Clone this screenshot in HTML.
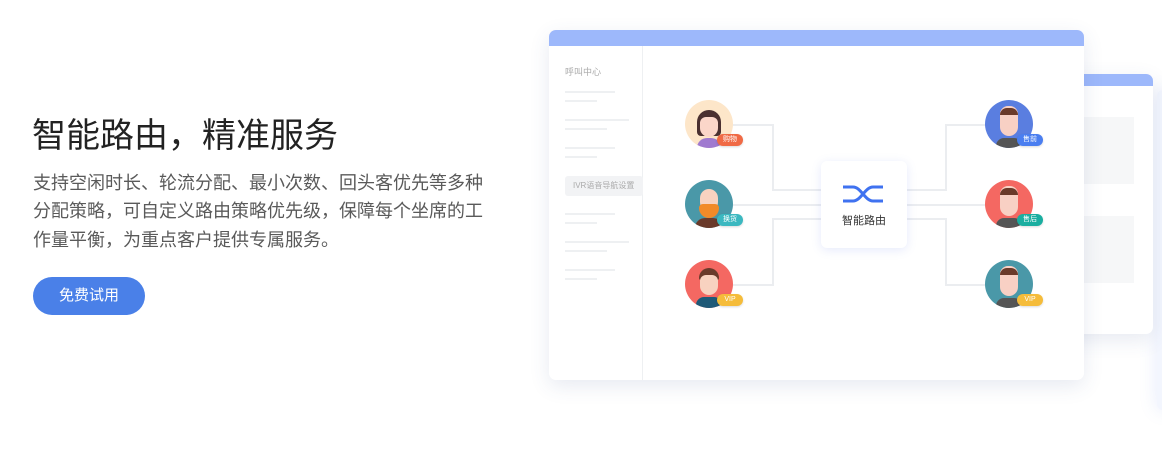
<!DOCTYPE html>
<html><head><meta charset="utf-8"><style>
*{margin:0;padding:0;box-sizing:border-box}
body{width:1162px;height:449px;background:#fff;position:relative;overflow:hidden;font-family:"Liberation Sans","Noto Sans CJK SC",sans-serif}
.abs{position:absolute}
h1{position:absolute;left:32px;top:108px;font-size:34px;font-weight:400;color:#222;white-space:nowrap}
.desc{position:absolute;left:33px;top:169px;font-size:18px;line-height:28.3px;color:#5a5a5a;white-space:nowrap}
.btn{position:absolute;left:33px;top:277px;width:112px;height:38px;border-radius:19px;background:#4a80e8;color:#fff;font-size:15px;text-align:center;line-height:38px}
.card{position:absolute;background:#fff;border-radius:7px;overflow:hidden;box-shadow:0 6px 20px rgba(60,80,140,0.12)}
.bar{height:16px;background:#9db8fb}
.ln{position:absolute;height:2px;background:#eef0f2}
.av{position:absolute;width:48px;height:48px;border-radius:50%;overflow:hidden}
.tag{position:absolute;height:12px;border-radius:6px;color:#fff;font-size:7px;line-height:12px;text-align:center;width:26px;box-shadow:0 1px 2px rgba(0,0,0,.15)}
.h{position:absolute;background:#ebedf0}
.v{position:absolute;background:#ebedf0;width:2px}
</style></head><body>
<h1>智能路由，精准服务</h1>
<div class="desc">支持空闲时长、轮流分配、最小次数、回头客优先等多种<br>分配策略，可自定义路由策略优先级，保障每个坐席的工<br>作量平衡，为重点客户提供专属服务。</div>
<div class="btn">免费试用</div>

<div class="abs" style="left:1157px;top:90px;width:20px;height:320px;background:#f3f6fe;border-radius:6px;box-shadow:0 0 18px rgba(90,120,230,0.15)"></div>
<div class="card" style="left:1060px;top:74px;width:93px;height:260px">
 <div style="height:12px;background:#9db8fb"></div>
 <div class="abs" style="left:20px;top:43px;width:54px;height:67px;background:#f6f7f8"></div>
 <div class="abs" style="left:20px;top:142px;width:54px;height:67px;background:#f6f7f8"></div>
</div>

<div class="card" style="left:549px;top:30px;width:535px;height:350px">
 <div class="bar"></div>
 <div class="abs" style="left:93px;top:16px;width:1px;height:334px;background:#eef0f2"></div>
 <div class="abs" style="left:16px;top:35px;font-size:9px;color:#aaa">呼叫中心</div>
 <div class="ln" style="left:16px;top:61px;width:50px"></div><div class="ln" style="left:16px;top:70px;width:32px"></div>
 <div class="ln" style="left:16px;top:89px;width:64px"></div><div class="ln" style="left:16px;top:98px;width:42px"></div>
 <div class="ln" style="left:16px;top:117px;width:50px"></div><div class="ln" style="left:16px;top:126px;width:32px"></div>
 <div class="abs" style="left:16px;top:146px;width:78px;height:20px;background:#f2f3f5;border-radius:3px;font-size:8px;color:#aaa;line-height:20px;padding-left:8px">IVR语音导航设置</div>
 <div class="ln" style="left:16px;top:183px;width:50px"></div><div class="ln" style="left:16px;top:192px;width:32px"></div>
 <div class="ln" style="left:16px;top:211px;width:64px"></div><div class="ln" style="left:16px;top:220px;width:42px"></div>
 <div class="ln" style="left:16px;top:239px;width:50px"></div><div class="ln" style="left:16px;top:248px;width:32px"></div>
</div>

<div class="h" style="left:733px;top:124px;width:40px;height:2px"></div>
<div class="v" style="left:772px;top:124px;height:67px"></div>
<div class="h" style="left:772px;top:189px;width:50px;height:2px"></div>
<div class="h" style="left:733px;top:204px;width:89px;height:2px"></div>
<div class="h" style="left:772px;top:218px;width:50px;height:2px"></div>
<div class="v" style="left:772px;top:218px;height:68px"></div>
<div class="h" style="left:733px;top:284px;width:40px;height:2px"></div>

<div class="h" style="left:906px;top:189px;width:41px;height:2px"></div>
<div class="v" style="left:945px;top:124px;height:67px"></div>
<div class="h" style="left:945px;top:124px;width:40px;height:2px"></div>
<div class="h" style="left:906px;top:204px;width:80px;height:2px"></div>
<div class="h" style="left:906px;top:218px;width:41px;height:2px"></div>
<div class="v" style="left:945px;top:218px;height:68px"></div>
<div class="h" style="left:945px;top:284px;width:40px;height:2px"></div>

<div class="abs" style="left:821px;top:161px;width:86px;height:87px;background:#fff;border-radius:6px;box-shadow:0 2px 10px rgba(80,110,230,0.15)">
 <svg class="abs" style="left:21px;top:23px" width="43" height="20" viewBox="0 0 43 20"><path d="M1 3h10c8 0 12 14 20 14h10M1 17h10c8 0 12-14 20-14h10" fill="none" stroke="#3f72f0" stroke-width="3"/></svg>
 <div class="abs" style="left:0;top:51px;width:86px;text-align:center;font-size:11px;color:#333">智能路由</div>
</div>

<div class="av" style="left:685px;top:100px;background:#fde6c9">
 <div class="abs" style="left:12px;top:10px;width:24px;height:26px;border-radius:12px 12px 4px 4px;background:#4a3030"></div>
 <div class="abs" style="left:15px;top:17px;width:18px;height:20px;border-radius:6px 6px 9px 9px;background:#fbd6c9"></div>
 <div class="abs" style="left:12px;top:38px;width:24px;height:14px;border-radius:10px 10px 0 0;background:#a07ad0"></div>
</div>
<div class="tag" style="left:717px;top:134px;background:#f06a45">购物</div>
<div class="av" style="left:685px;top:180px;background:#4a98a8">
 <div class="abs" style="left:15px;top:9px;width:18px;height:22px;border-radius:9px;background:#f8d2c0"></div>
 <div class="abs" style="left:14px;top:24px;width:20px;height:14px;border-radius:4px 4px 10px 10px;background:#f28a28"></div>
 <div class="abs" style="left:10px;top:38px;width:28px;height:14px;border-radius:10px 10px 0 0;background:#6a3a2a"></div>
</div>
<div class="tag" style="left:717px;top:214px;background:#3bb8c0">换货</div>
<div class="av" style="left:685px;top:260px;background:#f46862">
 <div class="abs" style="left:14px;top:8px;width:20px;height:12px;border-radius:10px 10px 2px 2px;background:#6a3a2a"></div>
 <div class="abs" style="left:15px;top:15px;width:18px;height:20px;border-radius:6px 6px 9px 9px;background:#f8d2c0"></div>
 <div class="abs" style="left:11px;top:37px;width:26px;height:14px;border-radius:8px 8px 0 0;background:#1e5a78"></div>
</div>
<div class="tag" style="left:717px;top:294px;background:#f5bc3a">VIP</div>

<div class="av" style="left:985px;top:100px;background:#5a7ee0">
 <div class="abs" style="left:15px;top:6px;width:18px;height:30px;border-radius:8px 8px 9px 9px;background:#f8d0c4"></div>
 <div class="abs" style="left:15px;top:8px;width:18px;height:7px;border-radius:8px 8px 0 0;background:#6a3a2a"></div>
 <div class="abs" style="left:11px;top:38px;width:26px;height:12px;border-radius:8px 8px 0 0;background:#555"></div>
</div>
<div class="tag" style="left:1017px;top:134px;background:#4a7ef0">售前</div>
<div class="av" style="left:985px;top:180px;background:#f46862">
 <div class="abs" style="left:15px;top:6px;width:18px;height:30px;border-radius:8px 8px 9px 9px;background:#f8d0c4"></div>
 <div class="abs" style="left:15px;top:8px;width:18px;height:7px;border-radius:8px 8px 0 0;background:#6a3a2a"></div>
 <div class="abs" style="left:11px;top:38px;width:26px;height:12px;border-radius:8px 8px 0 0;background:#555"></div>
</div>
<div class="tag" style="left:1017px;top:214px;background:#1aaea0">售后</div>
<div class="av" style="left:985px;top:260px;background:#4a98a8">
 <div class="abs" style="left:15px;top:6px;width:18px;height:30px;border-radius:8px 8px 9px 9px;background:#f8d0c4"></div>
 <div class="abs" style="left:15px;top:8px;width:18px;height:7px;border-radius:8px 8px 0 0;background:#6a3a2a"></div>
 <div class="abs" style="left:11px;top:38px;width:26px;height:12px;border-radius:8px 8px 0 0;background:#555"></div>
</div>
<div class="tag" style="left:1017px;top:294px;background:#f5bc3a">VIP</div>
</body></html>
